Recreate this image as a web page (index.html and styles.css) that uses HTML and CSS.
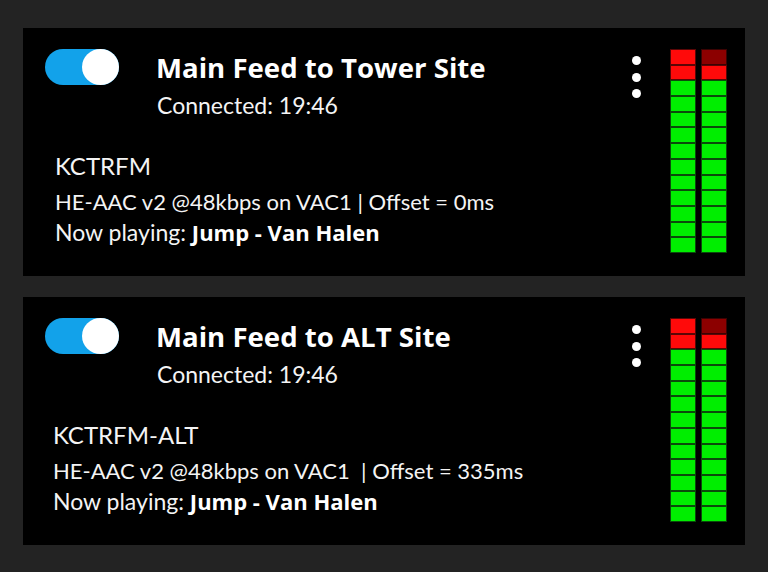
FILE: index.html
```html
<!DOCTYPE html>
<html>
<head>
<meta charset="utf-8">
<link rel="stylesheet" href="styles.css">
</head>
<body>
<div class="list">
  <div class="card">
    <div class="main">
      <div class="header">
        <div class="toggle"><div class="knob"></div></div>
        <div class="titles">
          <div class="title">Main Feed to Tower Site</div>
          <div class="status">Connected: 19:46</div>
        </div>
      </div>
      <div class="info">
        <div class="station">KCTRFM</div>
        <div class="line">HE-AAC v2 @48kbps on VAC1 | Offset = 0ms</div>
        <div class="line np">Now playing: <b>Jump - Van Halen</b></div>
      </div>
    </div>
    <div class="kebab"><span></span><span></span><span></span></div>
    <div class="meter">
      <div class="col">
        <i class="r"></i><i class="r"></i><i></i><i></i><i></i><i></i><i></i><i></i><i></i><i></i><i></i><i></i><i></i>
      </div>
      <div class="col">
        <i class="d"></i><i class="r"></i><i></i><i></i><i></i><i></i><i></i><i></i><i></i><i></i><i></i><i></i><i></i>
      </div>
    </div>
  </div>
  <div class="card">
    <div class="main">
      <div class="header">
        <div class="toggle"><div class="knob"></div></div>
        <div class="titles">
          <div class="title">Main Feed to ALT Site</div>
          <div class="status">Connected: 19:46</div>
        </div>
      </div>
      <div class="info alt">
        <div class="station">KCTRFM-ALT</div>
        <div class="line">HE-AAC v2 @48kbps on VAC1 &nbsp;| Offset = 335ms</div>
        <div class="line np">Now playing: <b>Jump - Van Halen</b></div>
      </div>
    </div>
    <div class="kebab"><span></span><span></span><span></span></div>
    <div class="meter">
      <div class="col">
        <i class="r"></i><i class="r"></i><i></i><i></i><i></i><i></i><i></i><i></i><i></i><i></i><i></i><i></i><i></i>
      </div>
      <div class="col">
        <i class="d"></i><i class="r"></i><i></i><i></i><i></i><i></i><i></i><i></i><i></i><i></i><i></i><i></i><i></i>
      </div>
    </div>
  </div>
</div>
</body>
</html>
```
FILE: styles.css
```css
html, body {
  margin: 0;
  padding: 0;
  background: #232323;
}
body {
  font-family: Lato, "Liberation Sans", sans-serif;
  color: #f4f4f4;
}
.list {
  display: flex;
  flex-direction: column;
  gap: 21px;
  padding: 28px 23px 0 23px;
}
.card {
  background: #000;
  height: 248px;
  box-sizing: border-box;
  padding: 21px 18px 0 22px;
  display: flex;
  align-items: flex-start;
}
.main {
  flex: 1;
}
.header {
  display: flex;
  align-items: flex-start;
}
.toggle {
  width: 74px;
  height: 36px;
  border-radius: 18px;
  background: #12a2ea;
  display: flex;
  justify-content: flex-end;
  margin-right: 37px;
  flex: none;
}
.knob {
  width: 37px;
  height: 36px;
  border-radius: 50%;
  background: #fff;
}
.title {
  font-family: "Open Sans", Lato, sans-serif;
  font-size: 27.6px;
  font-weight: 700;
  line-height: 36px;
  color: #fff;
}
.status {
  font-size: 23px;
  line-height: 30px;
  margin-top: 5px;
  margin-left: 1px;
}
.info {
  margin: 30px 0 0 10px;
}
.info.alt {
  margin-left: 8px;
}
.station {
  font-size: 24px;
  line-height: 32px;
  margin-bottom: 4px;
}
.line {
  font-size: 22px;
  line-height: 31px;
}
.line.np {
  font-size: 23px;
}
.line b {
  font-family: "Open Sans", Lato, sans-serif;
  font-size: 22px;
  font-weight: 700;
  color: #fff;
}
.kebab {
  display: flex;
  flex-direction: column;
  gap: 7.6px;
  margin-top: 7px;
  margin-right: 29px;
}
.kebab span {
  width: 9px;
  height: 9px;
  border-radius: 50%;
  background: #fff;
}
.meter {
  display: flex;
  gap: 5px;
}
.col {
  width: 26px;
  height: 204px;
  display: flex;
  flex-direction: column;
}
.col i {
  flex: 1;
  box-sizing: border-box;
  background: #00ee00;
  border: 1px solid #0b4a0b;
}
.col i.r {
  background: #ff0a0a;
  border-color: #5a0606;
}
.col i.d {
  background: #8c0000;
  border-color: #3a0303;
}
```
